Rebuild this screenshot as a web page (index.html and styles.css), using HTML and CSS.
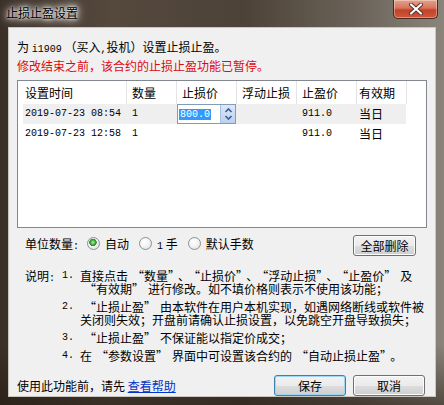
FILE: index.html
```html
<!DOCTYPE html>
<html lang="zh-CN">

<head>
    <meta charset="UTF-8">
    <meta name="viewport" content="width=device-width, initial-scale=1.0">
    <title>止损止盈设置</title>
    <link rel="stylesheet" href="styles.css">
</head>

<body>
    <div class="window">
        <div class="titlebar">
            <span class="title">止损止盈设置</span>
            <div class="close">
                <svg width="16" height="12" viewBox="0 0 16 12">
                    <path d="M3 1.5 L13 10.5 M13 1.5 L3 10.5" stroke="#5a2a20" stroke-width="4" stroke-linecap="round" fill="none" />
                    <path d="M3 1.5 L13 10.5 M13 1.5 L3 10.5" stroke="#fff" stroke-width="2.2" stroke-linecap="round" fill="none" />
                </svg>
            </div>
        </div>

        <div class="client">
            <p class="info">为 <span class="mono">i1909</span> （买入<span class="mono">,</span>投机）设置止损止盈。</p>
            <p class="info warn">修改结束之前，该合约的止损止盈功能已暂停。</p>

            <div class="list">
                <div class="row head">
                    <div class="cell first">设置时间</div>
                    <div class="cell">数量</div>
                    <div class="cell">止损价</div>
                    <div class="cell">浮动止损</div>
                    <div class="cell">止盈价</div>
                    <div class="cell last">有效期</div>
                    <div class="cell"></div>
                </div>
                <div class="row sel">
                    <div class="cell first mono">2019-07-23 08:54</div>
                    <div class="cell mono">1</div>
                    <div class="cell edit">
                        <span class="edit-text mono">800.0</span>
                        <span class="spin">
                            <svg width="9" height="14" viewBox="0 0 9 14">
                                <path d="M1.5 5 L4.5 2 L7.5 5 M1.5 9 L4.5 12 L7.5 9" stroke="#3b5f9a" stroke-width="1.6" fill="none" />
                            </svg>
                        </span>
                    </div>
                    <div class="cell"></div>
                    <div class="cell mono">911.0</div>
                    <div class="cell last">当日</div>
                    <div class="cell"></div>
                </div>
                <div class="row">
                    <div class="cell first mono">2019-07-23 12:58</div>
                    <div class="cell mono">1</div>
                    <div class="cell"></div>
                    <div class="cell"></div>
                    <div class="cell mono">911.0</div>
                    <div class="cell last">当日</div>
                    <div class="cell"></div>
                </div>
            </div>

            <div class="options">
                <div class="radios">
                    <span class="label">单位数量<span class="mono">:</span></span>
                    <span class="radio checked"></span><span class="opt">自动</span>
                    <span class="radio"></span><span class="opt"><span class="mono">1</span>&nbsp;手</span>
                    <span class="radio"></span><span class="opt">默认手数</span>
                </div>
                <button class="btn small">全部删除</button>
            </div>

            <div class="notes">
                <span class="notes-label">说明<span class="mono">:</span></span>
                <span class="num mono">1.</span>
                <span class="text">直接点击<span class="ql">“</span>数量<span class="qr">”</span>、<span class="ql">“</span>止损价<span class="qr">”</span>、<span class="ql">“</span>浮动止损<span class="qr">”</span>、<span class="ql">“</span>止盈价<span class="qr">”</span>及<br><span class="ql">“</span>有效期<span class="qr">”</span>进行修改。如不填价格则表示不使用该功能；</span>

                <span></span>
                <span class="num mono">2.</span>
                <span class="text"><span class="ql">“</span>止损止盈<span class="qr">”</span>由本软件在用户本机实现，如遇网络断线或软件被<br>关闭则失效；开盘前请确认止损设置，以免跳空开盘导致损失；</span>

                <span></span>
                <span class="num mono">3.</span>
                <span class="text"><span class="ql">“</span>止损止盈<span class="qr">”</span>不保证能以指定价成交；</span>

                <span></span>
                <span class="num mono">4.</span>
                <span class="text">在<span class="ql">“</span>参数设置<span class="qr">”</span>界面中可设置该合约的<span class="ql">“</span>自动止损止盈<span class="qr">”</span>。</span>
            </div>

            <div class="footer">
                <span class="help">使用此功能前，请先 <a href="#">查看帮助</a></span>
                <div class="actions">
                    <button class="btn default">保存</button>
                    <button class="btn">取消</button>
                </div>
            </div>
        </div>
    </div>
</body>

</html>
```

FILE: styles.css
```css
* {
    box-sizing: border-box;
}

body {
    margin: 0;
    font-family: "Noto Sans CJK SC", sans-serif;
    font-size: 12px;
    color: #000;
}

.mono {
    font-family: "Liberation Mono", "Noto Sans CJK SC", monospace;
    font-size: 10px;
}

.window {
    width: 444px;
    height: 405px;
    display: flex;
    flex-direction: column;
    background:
        linear-gradient(180deg, rgba(0, 0, 0, 0) 0%, rgba(0, 0, 0, 0) 85%, rgba(30, 20, 12, 0.5) 100%),
        linear-gradient(90deg, #3b3028 0%, #55493e 25%, #4d4238 55%, #6a6258 80%, #8a857a 100%);
}

.titlebar {
    height: 27px;
    display: flex;
    align-items: flex-start;
    padding-left: 6px;
}

.title {
    margin-top: 4px;
    line-height: 17px;
    font-size: 12px;
    color: #000;
    text-shadow: 0 0 3px #fff, 0 0 6px #fff, 0 0 10px rgba(255, 255, 255, 0.9), 0 0 14px rgba(255, 255, 255, 0.7);
}

.close {
    margin-left: auto;
    margin-right: 6px;
    width: 45px;
    height: 19px;
    display: flex;
    align-items: center;
    justify-content: center;
    border: 1px solid #4a2a22;
    border-top: none;
    border-radius: 0 0 5px 5px;
    background: linear-gradient(180deg, #e5a28c 0%, #d6745a 45%, #c2432a 55%, #d0583a 100%);
    box-shadow: inset 0 0 0 1px rgba(255, 255, 255, 0.35);
}

.client {
    flex: 1;
    margin: 0 8px 8px;
    background: #f0f0f0;
    border: 1px solid #c9c6c0;
    padding: 11px 8px 0 8px;
    display: flex;
    flex-direction: column;
}

.info {
    margin: 0;
    line-height: 16px;
}

.warn {
    color: #dc0a14;
}

.list {
    margin-top: 6px;
    height: 148px;
    background: #fff;
    border: 1px solid #828790;
}

.row {
    display: grid;
    grid-template-columns: 109px 50px 60px 60px 60px 50px 1fr;
    height: 20px;
    line-height: 20px;
}

.row.head {
    height: 23px;
    line-height: 23px;
}

.row.head .cell {
    border-right: 1px solid #e3e3e3;
}

.row.head .cell:last-child {
    border-right: none;
}

.row.sel {
    background: linear-gradient(90deg, transparent 5px, #efefef 5px, #efefef 388px, transparent 388px);
}

.cell {
    padding-left: 5px;
    white-space: nowrap;
}

.cell.first {
    padding-left: 7px;
}

.cell.last {
    padding-left: 2px;
}

.cell.edit {
    padding: 0;
    display: flex;
    align-items: center;
    border: 1px solid #7f9db9;
    background: #fff;
    margin-right: 1px;
}

.edit-text {
    margin-left: 1px;
    line-height: 11px;
    padding: 0 1px;
    background: #3399ff;
    color: #fff;
}

.spin {
    margin-left: auto;
    width: 15px;
    height: 100%;
    display: flex;
    align-items: center;
    justify-content: center;
    background: linear-gradient(180deg, #dde8f8, #bcd0ee);
    border-left: 1px solid #a9bfdf;
}

.options {
    margin-top: 7px;
    height: 21px;
    display: flex;
    align-items: center;
    padding-left: 8px;
    padding-right: 11px;
}

.radios {
    display: flex;
    align-items: center;
    padding-bottom: 4px;
}

.label {
    margin-right: 8px;
}

.radio {
    width: 13px;
    height: 13px;
    border-radius: 50%;
    border: 1px solid #8e8f8f;
    background: radial-gradient(circle at 40% 35%, #ffffff 0%, #f2f2f2 50%, #d6d6d6 100%);
    margin-right: 5px;
}

.radio.checked {
    background:
        radial-gradient(circle at 45% 40%, #b8f0b0 0px, #3aa83a 2.5px, #2b8a2b 3.5px, transparent 4px),
        radial-gradient(circle at 40% 35%, #ffffff 0%, #f2f2f2 50%, #d6d6d6 100%);
}

.opt {
    margin-right: 10px;
}

.btn {
    font-family: "Noto Sans CJK SC", sans-serif;
    font-size: 12px;
    color: #000;
    height: 21px;
    width: 72px;
    padding: 0;
    border: 1px solid #707070;
    border-radius: 3px;
    background: linear-gradient(180deg, #f2f2f2 0%, #ebebeb 50%, #dddddd 51%, #cfcfcf 100%);
    box-shadow: inset 0 0 0 1px #fcfcfc;
}

.btn.small {
    margin-left: auto;
    width: 63px;
}

.btn.default {
    border-color: #3c7fb1;
    box-shadow: inset 0 0 0 1px #9fd6f5;
}

.notes {
    margin-top: 13px;
    margin-left: 8px;
    display: grid;
    grid-template-columns: 37px 18px auto;
    row-gap: 5px;
    line-height: 13px;
}

.notes .text {
    white-space: nowrap;
}

/* full-width quotes, as the dialog font draws them */
.ql {
    margin-left: 4px;
}

.qr {
    margin-right: 4px;
}

.footer {
    margin-top: 13px;
    display: flex;
    align-items: center;
    padding-right: 2px;
}

.help a {
    color: #0033cc;
    text-decoration: underline;
}

.actions {
    margin-left: auto;
    display: flex;
    gap: 7px;
}
```
